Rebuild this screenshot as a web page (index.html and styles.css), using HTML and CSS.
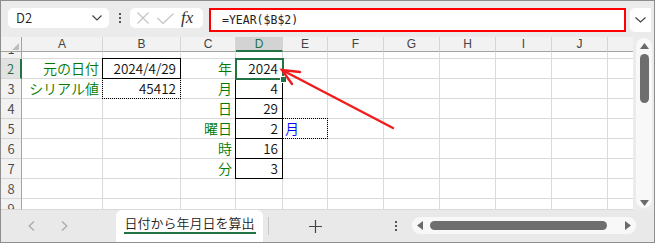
FILE: index.html
```html
<!DOCTYPE html>
<html lang="ja">
<head>
<meta charset="utf-8">
<title>日付から年月日を算出</title>
<link rel="stylesheet" href="styles.css">
</head>
<body>
<div class="app">
  <div class="fbar">
    <div class="namebox">
      <span class="nb-text">D2</span>
      <svg class="chev" width="10" height="6" viewBox="0 0 10 6"><path d="M0.5 0.5 L5 5 L9.5 0.5" fill="none" stroke="#444" stroke-width="1.2"/></svg>
    </div>
    <div class="vdots"><i></i><i></i><i></i></div>
    <div class="fxbox">
      <svg width="12" height="12" viewBox="0 0 12 12"><path d="M0.5 0.5 L11.5 11.5 M11.5 0.5 L0.5 11.5" stroke="#c4c4c4" stroke-width="1.2"/></svg>
      <svg width="17" height="11" viewBox="0 0 17 11"><path d="M0.5 5 L6 10.5 L16.5 0.5" fill="none" stroke="#c4c4c4" stroke-width="1.2"/></svg>
      <span class="fx">fx</span>
    </div>
    <div class="formula">=YEAR($B$2)</div>
    <div class="expand">
      <svg width="11" height="6" viewBox="0 0 11 6"><path d="M0.5 0.5 L5.5 5 L10.5 0.5" fill="none" stroke="#444" stroke-width="1.2"/></svg>
    </div>
  </div>

  <div class="main">
    <div class="sheet">
      <div class="h corner"><svg width="21" height="14" viewBox="0 0 21 14"><polygon points="18,6 18,13 11,13" fill="#bdbdbd"/></svg></div>
      <div class="h">A</div><div class="h">B</div><div class="h">C</div><div class="h hsel">D</div><div class="h">E</div><div class="h">F</div><div class="h">G</div><div class="h">H</div><div class="h">I</div><div class="h">J</div><div class="h k"></div>

      <div class="r r-part"><span class="r-bottom">1</span></div>
      <div class="c"></div><div class="c"></div><div class="c"></div><div class="c"></div><div class="c"></div><div class="c"></div><div class="c"></div><div class="c"></div><div class="c"></div><div class="c"></div><div class="c k"></div>

      <div class="r rsel">2</div>
      <div class="c lbl">元の日付</div><div class="c num bx">2024/4/29</div><div class="c lbl">年</div><div class="c num bx sel">2024<span class="handle"></span></div>
      <div class="c"></div><div class="c"></div><div class="c"></div><div class="c"></div><div class="c"></div><div class="c"></div><div class="c k"></div>

      <div class="r">3</div>
      <div class="c lbl">シリアル値</div><div class="c num dt">45412</div><div class="c lbl">月</div><div class="c num bx">4</div>
      <div class="c"></div><div class="c"></div><div class="c"></div><div class="c"></div><div class="c"></div><div class="c"></div><div class="c k"></div>

      <div class="r">4</div>
      <div class="c"></div><div class="c"></div><div class="c lbl">日</div><div class="c num bx">29</div>
      <div class="c"></div><div class="c"></div><div class="c"></div><div class="c"></div><div class="c"></div><div class="c"></div><div class="c k"></div>

      <div class="r">5</div>
      <div class="c"></div><div class="c"></div><div class="c lbl">曜日</div><div class="c num bx">2</div><div class="c wd dt">月</div>
      <div class="c"></div><div class="c"></div><div class="c"></div><div class="c"></div><div class="c"></div><div class="c k"></div>

      <div class="r">6</div>
      <div class="c"></div><div class="c"></div><div class="c lbl">時</div><div class="c num bx">16</div>
      <div class="c"></div><div class="c"></div><div class="c"></div><div class="c"></div><div class="c"></div><div class="c"></div><div class="c k"></div>

      <div class="r">7</div>
      <div class="c"></div><div class="c"></div><div class="c lbl">分</div><div class="c num bx">3</div>
      <div class="c"></div><div class="c"></div><div class="c"></div><div class="c"></div><div class="c"></div><div class="c"></div><div class="c k"></div>

      <div class="r">8</div>
      <div class="c"></div><div class="c"></div><div class="c"></div><div class="c"></div><div class="c"></div><div class="c"></div><div class="c"></div><div class="c"></div><div class="c"></div><div class="c"></div><div class="c k"></div>

      <div class="r r-top">9</div>
      <div class="c"></div><div class="c"></div><div class="c"></div><div class="c"></div><div class="c"></div><div class="c"></div><div class="c"></div><div class="c"></div><div class="c"></div><div class="c"></div><div class="c k"></div>

      <svg class="arrow" width="632" height="173" viewBox="0 0 632 173">
        <g stroke="#f31c1c" stroke-width="2.4" stroke-linecap="round" fill="none">
          <path d="M392 91 L281 33"/>
          <path d="M299 35 L281 33 L291 47"/>
        </g>
      </svg>
    </div>

    <div class="vscroll">
      <div class="vtrack">
        <svg width="9" height="6" viewBox="0 0 9 6"><polygon points="4.5,0 9,6 0,6" fill="#6a6a6a"/></svg>
        <div class="vthumb"></div>
        <div class="fill"></div>
        <svg width="9" height="6" viewBox="0 0 9 6"><polygon points="0,0 9,0 4.5,6" fill="#6a6a6a"/></svg>
      </div>
    </div>
  </div>

  <div class="tabbar">
    <div class="nav">
      <svg width="7" height="10" viewBox="0 0 7 10"><path d="M6 0.5 L1.2 5 L6 9.5" fill="none" stroke="#a8a8a8" stroke-width="1.2"/></svg>
      <svg width="7" height="10" viewBox="0 0 7 10"><path d="M1 0.5 L5.8 5 L1 9.5" fill="none" stroke="#a8a8a8" stroke-width="1.2"/></svg>
    </div>
    <div class="tab"><span class="tab-text">日付から年月日を算出</span><span class="tab-line"></span></div>
    <div class="sep"></div>
    <div class="add"><svg width="13" height="13" viewBox="0 0 13 13"><path d="M6.5 0 V13 M0 6.5 H13" stroke="#444" stroke-width="1.2"/></svg></div>
    <div class="more"><i></i><i></i><i></i></div>
    <div class="htrack">
      <svg width="6" height="9" viewBox="0 0 6 9"><polygon points="0,4.5 6,0 6,9" fill="#6a6a6a"/></svg>
      <div class="hthumb"></div>
      <svg width="6" height="9" viewBox="0 0 6 9"><polygon points="0,0 6,4.5 0,9" fill="#6a6a6a"/></svg>
    </div>
  </div>
</div>
</body>
</html>
```

FILE: styles.css
```css
body {
  margin: 0;
}

.app {
  width: 655px;
  height: 243px;
  box-sizing: border-box;
  border: 1px solid #8e8e8e;
  background: #ebebeb;
  display: flex;
  flex-direction: column;
  overflow: hidden;
  font-family: "Noto Sans CJK JP", sans-serif;
}

/* formula bar */
.fbar {
  height: 36px;
  flex: none;
  box-sizing: border-box;
  padding-top: 7px;
  display: flex;
  align-items: flex-start;
}

.namebox {
  margin-left: 7px;
  width: 101px;
  height: 20px;
  box-sizing: border-box;
  background: #fff;
  border-radius: 5px;
  display: flex;
  align-items: center;
  justify-content: space-between;
  padding: 0 7px 0 8px;
}

.nb-text {
  font-size: 13px;
  font-weight: 350;
  line-height: 20px;
  color: #222;
}

.vdots {
  width: 21px;
  height: 20px;
  display: flex;
  flex-direction: column;
  align-items: center;
  justify-content: center;
  gap: 2px;
}

.vdots i,
.more i {
  display: block;
  width: 2px;
  height: 2px;
  background: #555;
}

.fxbox {
  width: 73px;
  height: 20px;
  box-sizing: border-box;
  background: #fff;
  border-radius: 5px;
  display: flex;
  align-items: center;
  padding-left: 7px;
  gap: 8px;
}

.fx {
  font-family: "Liberation Serif", serif;
  font-style: italic;
  font-size: 17px;
  line-height: 20px;
  color: #333;
  margin-left: -1px;
}

.formula {
  margin-left: 6px;
  width: 417px;
  height: 24px;
  box-sizing: border-box;
  border: 2px solid #ff0000;
  background: #fff;
  padding-left: 11px;
  font-family: "DejaVu Sans Mono", monospace;
  font-size: 11.5px;
  line-height: 20px;
  color: #222;
}

.expand {
  margin-left: 4px;
  width: 21px;
  height: 24px;
  background: #fff;
  border-radius: 5px 0 0 5px;
  display: flex;
  align-items: center;
  justify-content: center;
}

/* sheet */
.main {
  height: 173px;
  flex: none;
  display: flex;
}

.sheet {
  width: 632px;
  position: relative;
  overflow: hidden;
  display: grid;
  grid-template-columns: 21px 81px 78px 55px 47px 45px 56px 56px 56px 56px 56px 25px;
  grid-template-rows: 15px 7px repeat(7, 20px) 11px;
  background: #fff;
}

.h {
  box-sizing: border-box;
  background: #f2f2f2;
  border-right: 1px solid #d6d6d6;
  border-bottom: 1px solid #a3a3a3;
  font-family: "Liberation Sans", sans-serif;
  font-size: 12px;
  line-height: 14px;
  color: #444;
  text-align: center;
}

.corner {
  border-right-color: #a3a3a3;
}

.corner svg {
  display: block;
}

.hsel {
  background: #d3d3d3;
  color: #217346;
  border-bottom: 2px solid #217346;
}

.r {
  box-sizing: border-box;
  background: #f2f2f2;
  border-right: 1px solid #a3a3a3;
  border-bottom: 1px solid #d6d6d6;
  font-size: 13px;
  font-weight: 350;
  line-height: 19px;
  color: #444;
  text-align: center;
  overflow: hidden;
}

.rsel {
  background: #e2e2e2;
  color: #1e6b40;
  border-right: 2px solid #217346;
}

.r-bottom {
  display: block;
  margin-top: -13px;
}

.c {
  box-sizing: border-box;
  border-right: 1px solid #dadada;
  border-bottom: 1px solid #dadada;
  font-size: 14px;
  font-weight: 350;
  line-height: 19px;
  white-space: nowrap;
  overflow: visible;
}

.k {
  border-right: 0;
}

.lbl {
  color: #007a00;
  text-align: right;
  padding-right: 3px;
}

.num {
  color: #111;
  text-align: right;
  padding-right: 4px;
  font-size: 13.5px;
}

.wd {
  color: #0000ff;
  padding-left: 2px;
}

.bx,
.dt {
  position: relative;
}

.bx::after,
.dt::after {
  content: "";
  position: absolute;
  left: -1px;
  top: -1px;
  right: -1px;
  bottom: -1px;
  border: 1px solid #000;
}

.dt::after {
  border-style: dotted;
}

.sel {
  z-index: 2;
}

.sel::after {
  left: -1px;
  top: -1px;
  right: -2px;
  bottom: -2px;
  border: 2px solid #217346;
}

.handle {
  position: absolute;
  right: -5px;
  bottom: -5px;
  width: 5px;
  height: 5px;
  background: #217346;
  border: 1px solid #fff;
  z-index: 3;
}

.arrow {
  position: absolute;
  left: 0;
  top: 0;
  z-index: 5;
  pointer-events: none;
}

/* vertical scrollbar */
.vscroll {
  flex: 1;
  padding: 1px 0 0 3px;
}

.vtrack {
  width: 16px;
  height: 170px;
  box-sizing: border-box;
  background: #f8f8f8;
  border-radius: 8px;
  padding: 5px 0 2px 4px;
  display: flex;
  flex-direction: column;
  align-items: flex-start;
}

.vtrack svg {
  display: block;
}

.vthumb {
  margin-top: 5px;
  width: 9px;
  height: 49px;
  border-radius: 5px;
  background: #6e6e6e;
}

.fill {
  flex: 1;
}

/* sheet tabs */
.tabbar {
  flex: 1;
  display: flex;
  align-items: stretch;
  background: #e9e9e9;
}

.nav {
  width: 115px;
  display: flex;
  align-items: center;
  padding-left: 27px;
  box-sizing: border-box;
  gap: 26px;
}

.tab {
  width: 147px;
  background: #fff;
  border-radius: 6px 6px 0 0;
  display: flex;
  flex-direction: column;
  align-items: center;
  padding-top: 4px;
  box-sizing: border-box;
}

.tab-text {
  font-size: 13px;
  font-weight: 350;
  line-height: 18px;
  color: #222;
}

.tab-line {
  display: block;
  width: 132px;
  height: 2px;
  background: #217346;
}

.sep {
  margin-left: 5px;
  width: 1px;
  height: 18px;
  align-self: center;
  background: #c6c6c6;
}

.add {
  margin-left: 26px;
  width: 40px;
  display: flex;
  align-items: center;
  justify-content: center;
}

.more {
  margin-left: 51px;
  width: 20px;
  display: flex;
  flex-direction: column;
  align-items: center;
  justify-content: center;
  gap: 2px;
}

.htrack {
  margin-left: 6px;
  width: 224px;
  height: 17px;
  align-self: center;
  margin-top: -2px;
  box-sizing: border-box;
  background: #f8f8f8;
  border-radius: 8px;
  padding: 0 5px;
  display: flex;
  align-items: center;
}

.htrack svg {
  display: block;
}

.hthumb {
  margin-left: 7px;
  margin-right: 18px;
  width: 177px;
  height: 9px;
  border-radius: 5px;
  background: #6e6e6e;
}
```
